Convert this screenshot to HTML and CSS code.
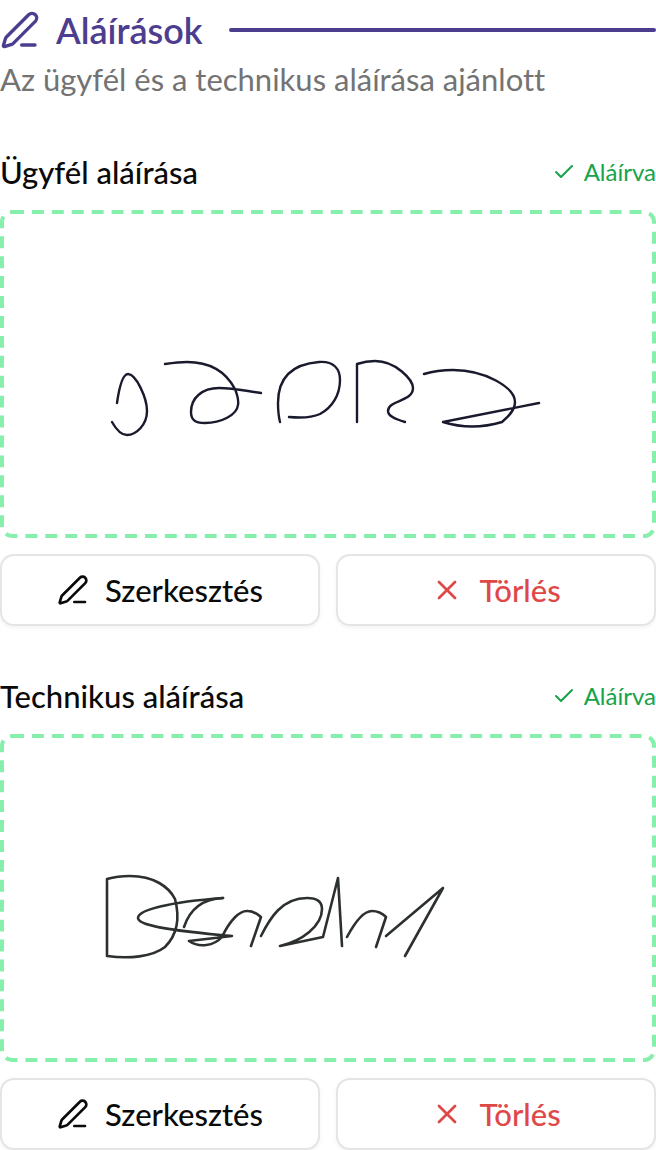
FILE: index.html
```html
<!DOCTYPE html>
<html lang="hu">
<head>
    <meta charset="UTF-8">
    <meta name="viewport" content="width=device-width, initial-scale=1.0">
    <title>Aláírások</title>
    <link rel="stylesheet" href="styles.css">
</head>
<body>
    <!-- shared icons -->
    <svg class="sprite" aria-hidden="true">
        <symbol id="icon-pen" viewBox="0 0 24 24">
            <path d="M13 21h8"/>
            <path d="M21.174 6.812a1 1 0 0 0-3.986-3.987L3.842 16.174a2 2 0 0 0-.5.83l-1.321 4.352a.5.5 0 0 0 .623.622l4.353-1.32a2 2 0 0 0 .83-.497z"/>
        </symbol>
        <symbol id="icon-check" viewBox="0 0 24 24">
            <path d="M20 6 9 17l-5-5"/>
        </symbol>
        <symbol id="icon-x" viewBox="0 0 24 24">
            <path d="M18 6 6 18"/>
            <path d="m6 6 12 12"/>
        </symbol>
    </svg>

    <main>
        <header class="page-header">
            <div class="title-row">
                <svg class="icon icon-lg" aria-hidden="true"><use href="#icon-pen"/></svg>
                <h1>Aláírások</h1>
                <span class="title-line"></span>
            </div>
            <p class="subtitle">Az ügyfél és a technikus aláírása ajánlott</p>
        </header>

        <div class="signatures">
            <section class="signature">
                <div class="signature-head">
                    <h2>Ügyfél aláírása</h2>
                    <span class="status">
                        <svg class="icon icon-sm" aria-hidden="true"><use href="#icon-check"/></svg>
                        Aláírva
                    </span>
                </div>
                <div class="signature-box">
                    <svg class="frame" aria-hidden="true"><rect x="2" y="2" rx="10" pathLength="1942"/></svg>
                    <svg class="drawing drawing-customer" viewBox="0 0 648 320" role="img" aria-label="Ügyfél aláírása">
                        <path d="M113 189C116 168 120 160 124 160C132 160 143 184 143 197C143 211 132 221 123 221C118 221 113 217 108 208"/>
                        <path d="M161 150C168 149 175 148 183 148C208 148 223 160 231 175C233 180 235 185 234 191C233 201 217 209 201 209C190 209 187 205 187 198C187 184 198 174 215 174C230 174 242 177 257 179"/>
                        <path d="M276 208C274 200 274 195 274 189C274 162 290 150 315 148C330 147 336 155 336 166C336 180 329 193 316 200C307 204 296 204 285 203"/>
                        <path d="M353 208V150C359 148 365 147 371 147C392 147 409 166 409 174C409 188 384 186 384 197C384 202 391 205 401 208"/>
                        <path d="M420 160C430 157 440 156 449 156C482 156 511 174 511 188C511 196 505 202 498 208C478 214 458 214 439 208L535 189"/>
                    </svg>
                </div>
                <div class="actions">
                    <button type="button" class="btn">
                        <svg class="icon" aria-hidden="true"><use href="#icon-pen"/></svg>
                        Szerkesztés
                    </button>
                    <button type="button" class="btn btn-danger">
                        <svg class="icon" aria-hidden="true"><use href="#icon-x"/></svg>
                        Törlés
                    </button>
                </div>
            </section>

            <section class="signature">
                <div class="signature-head">
                    <h2>Technikus aláírása</h2>
                    <span class="status">
                        <svg class="icon icon-sm" aria-hidden="true"><use href="#icon-check"/></svg>
                        Aláírva
                    </span>
                </div>
                <div class="signature-box">
                    <svg class="frame" aria-hidden="true"><rect x="2" y="2" rx="10" pathLength="1942"/></svg>
                    <svg class="drawing drawing-technician" viewBox="0 0 648 320" role="img" aria-label="Technikus aláírása">
                        <path d="M103 218V141C110 139 118 138 126 138C150 138 165 149 171 161C176 180 174 196 161 209C148 219 125 221 103 218"/>
                        <path d="M219 160C165 164 134 172 134 180C134 187 160 192 228 198L185 203C195 210 210 208 218 199C226 182 236 172 244 173C250 173 253 176 257 179L247 208"/>
                        <path d="M180 189C185 174 195 161 219 160"/>
                        <path d="M257 198C266 180 278 160 303 160C315 160 318 165 318 171C318 188 298 203 276 208L319 199L334 140L338 208"/>
                        <path d="M343 199C351 184 359 173 368 173C374 173 378 175 382 179L372 209"/>
                        <path d="M382 198L439 150L401 218"/>
                    </svg>
                </div>
                <div class="actions">
                    <button type="button" class="btn">
                        <svg class="icon" aria-hidden="true"><use href="#icon-pen"/></svg>
                        Szerkesztés
                    </button>
                    <button type="button" class="btn btn-danger">
                        <svg class="icon" aria-hidden="true"><use href="#icon-x"/></svg>
                        Törlés
                    </button>
                </div>
            </section>
        </div>
    </main>
</body>
</html>
```
FILE: styles.css
```css
* {
    box-sizing: border-box;
}
body {
    margin: 0;
    font-family: Lato, "Open Sans", sans-serif;
    font-size: 31px;
    font-variant-ligatures: none;
    line-height: 38px;
    color: #0a0a0a;
    background-color: #fff;
}
h1, h2, p {
    margin: 0;
}
.sprite {
    display: none;
}
.icon {
    width: 32px;
    height: 32px;
    flex-shrink: 0;
    fill: none;
    stroke: currentColor;
    stroke-width: 2;
    stroke-linecap: round;
    stroke-linejoin: round;
}
.icon-lg {
    width: 40px;
    height: 40px;
}
.icon-sm {
    width: 24px;
    height: 24px;
}
.page-header {
    margin-bottom: 52px;
}
.title-row {
    display: flex;
    align-items: center;
    gap: 16px;
    height: 60px;
    color: #4c3d8f;
}
h1 {
    font-size: 36px;
    font-weight: 600;
}
.title-line {
    flex: 1;
    height: 4px;
    margin-left: 10px;
    border-radius: 2px;
    background-color: #4c3d8f;
}
.subtitle {
    color: #737373;
}
.signatures {
    display: flex;
    flex-direction: column;
    gap: 48px;
}
.signature {
    display: flex;
    flex-direction: column;
    gap: 16px;
}
.signature-head {
    display: flex;
    align-items: center;
    justify-content: space-between;
    height: 44px;
}
h2 {
    font-size: 31px;
    font-weight: 500;
}
.status {
    display: flex;
    align-items: center;
    gap: 8px;
    font-size: 24px;
    color: #16a34a;
}
.signature-box {
    position: relative;
    padding: 4px;
    border-radius: 12px;
    background-color: #fff;
}
/* dashed outline, dashes longer than the border-style ones */
.frame {
    position: absolute;
    inset: 0;
    width: 100%;
    height: 100%;
}
.frame rect {
    width: calc(100% - 4px);
    height: calc(100% - 4px);
    fill: none;
    stroke: #86efac;
    stroke-width: 4;
    stroke-dasharray: 12 8;
}
.drawing {
    display: block;
    width: 100%;
    fill: none;
    stroke-width: 2.4;
    stroke-linecap: round;
    stroke-linejoin: round;
}
.drawing-customer {
    stroke: #1a1a2e;
}
.drawing-technician {
    stroke: #2d3030;
    stroke-width: 2.6;
}
.actions {
    display: grid;
    grid-template-columns: 1fr 1fr;
    gap: 16px;
}
.btn {
    display: flex;
    align-items: center;
    justify-content: center;
    gap: 16px;
    height: 72px;
    border: 2px solid #e5e5e5;
    border-radius: 14px;
    background-color: #fff;
    box-shadow: 0 2px 4px rgba(0, 0, 0, 0.05);
    font-family: inherit;
    font-size: 31px;
    font-weight: 500;
    color: #0a0a0a;
    cursor: pointer;
}
.btn:hover {
    background-color: #f5f5f5;
}
.btn-danger {
    color: #e04848;
}
```
